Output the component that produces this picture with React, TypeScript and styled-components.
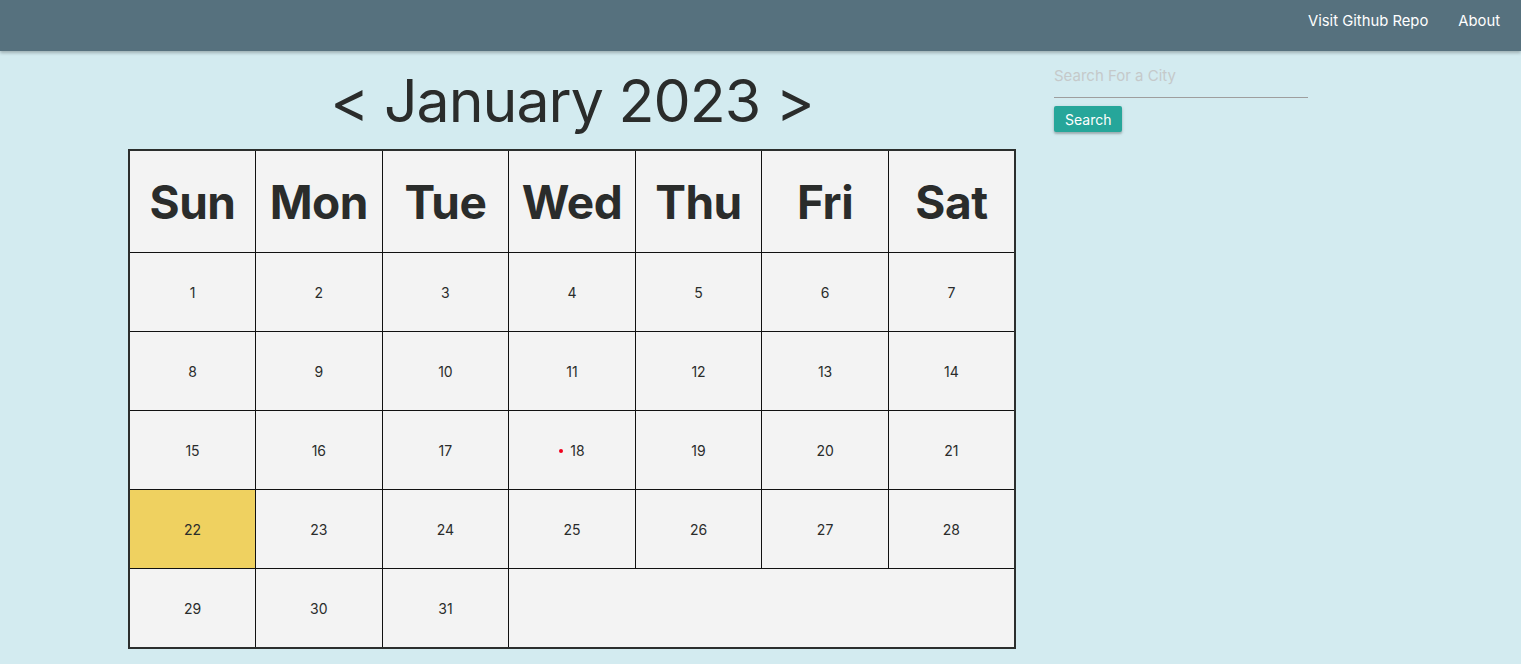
import React from 'react'
import styled, { createGlobalStyle } from 'styled-components'

const GlobalStyle = createGlobalStyle`
  html, body {
    margin: 0;
    padding: 0;
    background: #d3ebf0;
    font-family: 'Inter', 'Liberation Sans', sans-serif;
    color: #2a2c2b;
  }
`

const Nav = styled.nav`
  height: 51px;
  background: #56717e;
  display: flex;
  justify-content: flex-end;
  box-shadow: 0 2px 3px rgba(0, 0, 0, 0.25);
  position: relative;
  z-index: 1;
`

const NavList = styled.ul`
  list-style: none;
  margin: 0 6px 0 0;
  padding: 0;
  display: flex;
`

const NavLink = styled.a`
  display: block;
  padding: 0 15px;
  line-height: 42px;
  font-size: 14.8px;
  color: #fff;
  text-decoration: none;
`

const Main = styled.main`
  display: flex;
  align-items: flex-start;
  padding-left: 128px;
`

const CalendarCol = styled.section`
  width: 888px;
`

const Title = styled.h1`
  margin: 11px 0 9px;
  text-align: center;
  font-size: 59px;
  font-weight: 400;
  letter-spacing: -1px;
  line-height: 78px;
`

const Table = styled.table`
  width: 888px;
  table-layout: fixed;
  border-collapse: collapse;
  border: 2px solid #2b2e2d;
  background: #f3f3f3;
`

const HeadCell = styled.th`
  height: 101px;
  padding: 0;
  border: 1px solid #111;
  font-size: 46px;
  font-weight: 700;
  letter-spacing: -0.5px;
  text-align: center;
`

const DayCell = styled.td<{ $today?: boolean }>`
  height: 78px;
  padding: 0;
  border: 1px solid #111;
  font-size: 14px;
  text-align: center;
  background: ${p => (p.$today ? '#efd160' : 'transparent')};
`

const EventDot = styled.span`
  display: inline-block;
  width: 4px;
  height: 4px;
  border-radius: 50%;
  background: #f0001c;
  margin-right: 7px;
  vertical-align: middle;
  position: relative;
  top: -1px;
`

const SearchCol = styled.aside`
  width: 254px;
  margin-left: 38px;
`

const SearchInput = styled.input`
  display: block;
  box-sizing: border-box;
  width: 100%;
  height: 47px;
  margin: 0 0 8px;
  padding: 2px 0 0;
  border: none;
  border-bottom: 1px solid #9e9e9e;
  background: transparent;
  font-family: inherit;
  font-size: 15px;
  outline: none;

  &::placeholder {
    color: #c5c9ca;
  }
`

const SearchButton = styled.button`
  height: 26px;
  padding: 0 11px;
  border: none;
  border-radius: 2px;
  background: #26a69a;
  color: #fff;
  font-family: inherit;
  font-size: 14px;
  box-shadow: 0 2px 2px rgba(0, 0, 0, 0.2), 0 1px 4px rgba(0, 0, 0, 0.12);
`

const days = ['Sun', 'Mon', 'Tue', 'Wed', 'Thu', 'Fri', 'Sat']

const weeks = [
  [1, 2, 3, 4, 5, 6, 7],
  [8, 9, 10, 11, 12, 13, 14],
  [15, 16, 17, 18, 19, 20, 21],
  [22, 23, 24, 25, 26, 27, 28],
  [29, 30, 31],
]

const today = 22
const eventDays = [18]

const App: React.FC = () => {
  return (
    <>
      <GlobalStyle />
      <Nav>
        <NavList>
          <li>
            <NavLink href="#">Visit Github Repo</NavLink>
          </li>
          <li>
            <NavLink href="#">About</NavLink>
          </li>
        </NavList>
      </Nav>
      <Main>
        <CalendarCol>
          <Title>&lt; January 2023 &gt;</Title>
          <Table>
            <thead>
              <tr>
                {days.map(d => (
                  <HeadCell key={d}>{d}</HeadCell>
                ))}
              </tr>
            </thead>
            <tbody>
              {weeks.map((week, i) => (
                <tr key={i}>
                  {week.map(n => (
                    <DayCell key={n} $today={n === today}>
                      {eventDays.includes(n) && <EventDot />}
                      {n}
                    </DayCell>
                  ))}
                  {week.length < 7 && <DayCell colSpan={7 - week.length} />}
                </tr>
              ))}
            </tbody>
          </Table>
        </CalendarCol>
        <SearchCol>
          <SearchInput placeholder="Search For a City" />
          <SearchButton>Search</SearchButton>
        </SearchCol>
      </Main>
    </>
  )
}

export default App
